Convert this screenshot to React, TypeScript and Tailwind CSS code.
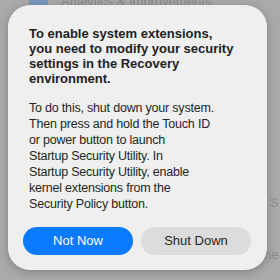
import React from "react";

const App: React.FC = () => {
  return (
    <div className="relative w-[280px] h-[280px] overflow-hidden bg-[#aaaaaa] font-['Liberation_Sans',Arial,sans-serif]">
      {/* dimmed settings window behind the sheet */}
      <div className="absolute left-[29px] top-[-8px] flex items-center gap-[13px] text-[#8c8c8c] text-[13px]">
        <div className="w-[19px] h-[16px] rounded-[3px] bg-[#7d97bd]" />
        <span>Analytics &amp; Improvements</span>
      </div>
      <span className="absolute left-[270px] top-[193px] text-[13px] text-[#8c8c8c]">S</span>
      <span className="absolute left-[264px] top-[245px] text-[13px] text-[#8c8c8c]">ne</span>

      <div className="absolute left-[8px] top-[5px] w-[259px] h-[265px] rounded-[22px] bg-[#efefef] shadow-[0_2px_10px_rgba(0,0,0,0.25)] flex flex-col pt-[21px] pb-[15px]">
        <h1 className="px-[21px] text-[13px] leading-[15px] font-bold text-[#222222] whitespace-nowrap">
          To enable system extensions,
          <br />
          you need to modify your security
          <br />
          settings in the Recovery
          <br />
          environment.
        </h1>
        <p className="mt-[14px] px-[21px] text-[12.5px] leading-[16px] tracking-[-0.2px] text-[#262626] whitespace-nowrap">
          To do this, shut down your system.
          <br />
          Then press and hold the Touch ID
          <br />
          or power button to launch
          <br />
          Startup Security Utility. In
          <br />
          Startup Security Utility, enable
          <br />
          kernel extensions from the
          <br />
          Security Policy button.
        </p>
        <div className="mt-auto px-[15px] flex gap-[8px]">
          <button className="w-[110px] h-[28px] rounded-full bg-[#0a7aff] text-white text-[13px] font-medium">
            Not Now
          </button>
          <button className="w-[110px] h-[28px] rounded-full bg-[#dcdcdc] text-[#262626] text-[13px]">
            Shut Down
          </button>
        </div>
      </div>
    </div>
  );
};

export default App;
